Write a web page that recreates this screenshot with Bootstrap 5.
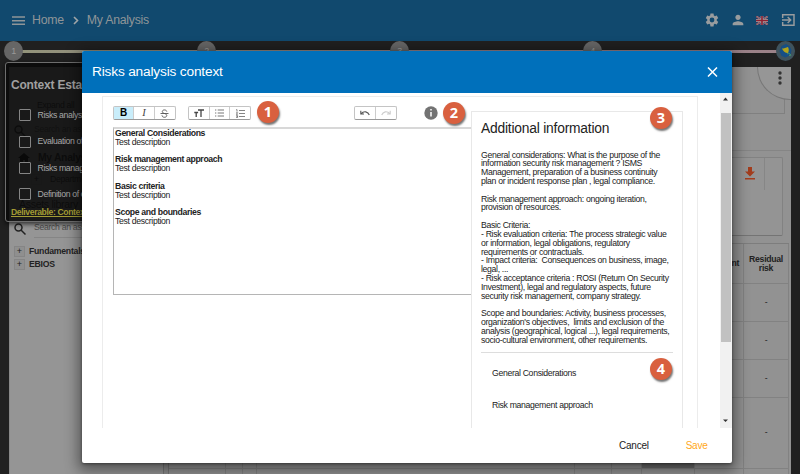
<!DOCTYPE html>
<html lang="en">
<head>
<meta charset="utf-8">
<meta name="viewport" content="width=device-width, initial-scale=1">
<title>Risks analysis context</title>
<link href="https://cdn.jsdelivr.net/npm/bootstrap@5.3.0/dist/css/bootstrap.min.css" rel="stylesheet">
<style>
html,body{height:474px;overflow:hidden}
body{background:#202020;font-family:"Liberation Sans",Arial,sans-serif;font-size:8.7px;letter-spacing:-.33px;line-height:8.83px;color:#222;position:relative}
svg{display:block;flex:none}
.topbar{height:41px;background:#11496e;color:#8f9598;font-size:12.3px;letter-spacing:-.25px;line-height:14px;padding:0 4px 1px 12px}
.crumbs{gap:7px}
.stepper{height:21px;padding:0 5px 0 4px;position:relative}
.stepper::before{content:"";position:absolute;left:14px;right:14px;top:9px;height:3px;background:linear-gradient(90deg,#92937a,#94808a 60%,#9b8288)}
.stepdot{width:19px;height:20px;border-radius:50%;background:#666;color:#999;font-size:9px;position:relative}
.stepdot.done{background:#3f535d}
.backpage{height:412px;margin:5px 9px 0;color:#222;background:#8e8e8e}
.pane-left{width:155px;height:407px;background:#959595;border-left:1px solid #888;border-right:1px solid #777;padding:34px 0 0 4px}
.expand{height:24px;padding-left:23px}
.libsearch{height:22px;gap:8px}
.libsearch span{border-bottom:1px solid #858585;width:110px;height:15px;line-height:9px;color:#4c4c4c}
.home-node{height:22px;gap:8px;padding-left:4px;font-size:10.4px}
.dept-node{height:20px;gap:8px;padding-left:17px}
.lib-title{height:34px;padding:9px 0 0 5px;font-size:10.6px;line-height:12px}
.lib-node{height:13px;gap:4px;letter-spacing:-.25px}
.plusbox{width:11px;height:11px;border:1px solid #858585;background:#8f8f8f;font-size:9px;line-height:9px;letter-spacing:0}
.pane-right{height:407px;background:#929292;border-left:1px solid #777;margin-left:4px;position:relative}
.cornerfab{position:absolute;right:0;top:0;width:34px;height:33px;border-bottom-left-radius:33px;border-left:1px solid #777;border-bottom:1px solid #777;background:#969696}
.strip1{height:47px;margin-right:6px;border:1px solid #808080;border-top:0}
.strip2{height:37px;border-bottom:1px solid #858585}
.strip3{height:79px;margin:6px 8px 7px 0;border:1px solid #828282;border-bottom-color:#747474;border-radius:2px;background:#949494}
.strip3 svg{margin:8px 8px 0 0}
.strip3 i{width:18px;height:32px;border-left:1px solid #868686}
.risks{margin-right:2px;display:grid;grid-template-columns:57px 17px 14px 318px 37px 30px 53px 49px 1fr;grid-template-rows:40px 38px 37.5px 38px 71px 20px;border-top:1px solid #7d7d7d}
.risks>div{border-right:1px solid #828282;border-bottom:1px solid #828282;display:flex;align-items:center;justify-content:center;text-align:center}
.risks .hd{font-weight:bold;line-height:9px;font-size:8.7px;letter-spacing:-.3px}
.risks .shade{background:#6c6c6c}
.ctx{position:absolute;left:5px;top:62px;width:150px;height:160px;border:1px solid #6e6e6e;border-radius:3px;background:rgba(10,10,10,.89);box-shadow:0 2px 5px rgba(0,0,0,.7);padding:15px 5px 0}
.ctx h2{font-size:12px;letter-spacing:-.2px;line-height:14px;font-weight:bold;color:#a0a0a0;margin:0 0 10px}
.ctx-row{height:26.4px;gap:7px;padding-left:7.5px;color:#a8a8a8;letter-spacing:-.36px}
.tick{width:12px;height:12px;border:1.5px solid #858585;border-radius:1px;flex:none}
.ctx a{color:#a29c34;font-weight:bold;font-size:8.6px;letter-spacing:-.36px;display:block;line-height:9px}
.dlg{position:absolute;left:82px;top:51px;width:649.5px;height:412px;background:#fff;border-radius:2px;box-shadow:0 4px 14px 4px rgba(0,0,0,.42),0 1px 3px rgba(0,0,0,.4);overflow:hidden}
.dlg-head{height:42px;background:#0070bb;color:#fff;font-size:13.7px;letter-spacing:-.18px;line-height:16px;padding:0 13.5px 1px 10px}
.dlg-main{height:335px;overflow:hidden}
.sheet{margin:3px 21.5px 0 20px;width:596px;height:350px;border:1px solid #ececec;padding:9px 15px 0 10px}
.edit{width:358px;flex:none}
.tools{height:15px}
.tgroup{height:14px;border:1px solid #c4c4c4;border-bottom-color:#999;border-radius:2px;background:#fff;letter-spacing:0}
.tgroup span{width:20.4px;border-right:1px solid #ccc}
.tgroup span:last-child{border-right:0}
.tgroup .on{background:#c9edfa}
.area{height:168px;margin-top:6px;border:1px solid #b5b5b5;border-top:2px solid #d8d8d8;border-right:0;padding:0 0 0 1px}
.area b{letter-spacing:-.36px}
.info-card{margin-top:5px;width:212px;height:340px;border:1px solid #e8e8e8;background:#fff;padding:9px 9px}
.info-card h3{font-size:13.8px;letter-spacing:-.2px;line-height:16px;font-weight:normal;margin:0 0 13.5px}
.info-card p{margin:0 0 8.83px;white-space:pre}
.info-card .rule{border-top:1px solid #ddd;margin:-1.5px 0 5px}
.info-card .opt{height:31.5px;padding-left:11px}
.scroller{width:11.5px;background:#f1f1f1;height:335px}
.scroller b{width:10px;height:229px;background:#c1c1c1}
.dlg-foot{height:35px;font-size:10px;letter-spacing:-.25px;gap:37px;padding-right:24px;line-height:11px}
.callout{position:absolute;width:22px;height:22px;border-radius:50%;background:#d9603f;color:#fff;font:bold 14.5px/21px "Open Sans","Liberation Sans",sans-serif;letter-spacing:0;text-align:center;box-shadow:1px 2px 2px rgba(0,0,0,.55)}
.c1{left:257px;top:101px}.c2{left:443px;top:102px}.c3{left:650px;top:107px}.c4{left:650px;top:358px}
</style>
<script src="https://cdn.jsdelivr.net/npm/bootstrap@5.3.0/dist/js/bootstrap.bundle.min.js"></script>
</head>
<body>
<header class="topbar d-flex align-items-center justify-content-between">
  <div class="crumbs d-flex align-items-center">
    <svg width="13" height="9" viewBox="0 0 13 9" stroke="#8f9598" stroke-width="1.4"><path d="M0 1h13M0 4.700h13M0 8.300h13"/></svg>
    <span>Home</span>
    <svg width="9" height="9" viewBox="0 0 9 9" fill="none" stroke="#a0a5a8" stroke-width="1.6"><path d="M3 1l3.500 3.500L3 8"/></svg>
    <span>My Analysis</span>
  </div>
  <div class="d-flex align-items-center">
    <svg width="16" height="16" viewBox="0 0 24 24" fill="#999c9e"><path d="M19.14 12.94c.04-.3.06-.61.06-.94 0-.32-.02-.64-.07-.94l2.03-1.58c.18-.14.23-.41.12-.61l-1.92-3.32c-.12-.22-.37-.29-.59-.22l-2.39.96c-.5-.38-1.03-.7-1.62-.94l-.36-2.54c-.04-.24-.24-.41-.48-.41h-3.84c-.24 0-.43.17-.47.41l-.36 2.54c-.59.24-1.13.57-1.62.94l-2.39-.96c-.22-.08-.47 0-.59.22L2.74 8.87c-.12.21-.08.47.12.61l2.03 1.58c-.05.3-.09.63-.09.94s.02.64.07.94l-2.03 1.58c-.18.14-.23.41-.12.61l1.92 3.32c.12.22.37.29.59.22l2.39-.96c.5.38 1.03.7 1.62.94l.36 2.54c.05.24.24.41.48.41h3.84c.24 0 .44-.17.47-.41l.36-2.54c.59-.24 1.13-.56 1.62-.94l2.39.96c.22.08.47 0 .59-.22l1.92-3.32c.12-.22.07-.47-.12-.61l-2.01-1.58zM12 15.6A3.6 3.6 0 1 1 12 8.400a3.6 3.6 0 0 1 0 7.200z"/></svg>
    <svg style="margin:0 10px" width="16" height="16" viewBox="0 0 24 24" fill="#999c9e"><path d="M12 12c2.210 0 4-1.790 4-4s-1.790-4-4-4-4 1.790-4 4 1.790 4 4 4zm0 2c-2.670 0-8 1.340-8 4v2h16v-2c0-2.660-5.330-4-8-4z"/></svg>
    <svg width="12" height="9" viewBox="0 0 12 9"><path fill="#2a3560" d="M0 0h12v9H0z"/><path d="M0 0l12 9M12 0L0 9" stroke="#9c9c9c" stroke-width="1.800"/><path d="M0 0l12 9M12 0L0 9" stroke="#8a1f30" stroke-width=".7"/><path d="M6 0v9M0 4.500h12" stroke="#a5a5a5" stroke-width="2.800"/><path d="M6 0v9M0 4.500h12" stroke="#8f1f30" stroke-width="1.600"/></svg>
    <svg style="margin-left:12px" width="16" height="16" viewBox="0 0 24 24" fill="none" stroke="#999c9e" stroke-width="2.200"><path d="M4 9V4h17v16H4v-5M3 12h13M11.500 7.500l4.500 4.500-4.500 4.500"/></svg>
  </div>
</header>
<div class="stepper d-flex justify-content-between">
  <div class="stepdot d-flex align-items-center justify-content-center">1</div>
  <div class="stepdot d-flex align-items-center justify-content-center">2</div>
  <div class="stepdot d-flex align-items-center justify-content-center">3</div>
  <div class="stepdot d-flex align-items-center justify-content-center">4</div>
  <div class="stepdot done d-flex align-items-center justify-content-center">
    <svg width="14" height="14" viewBox="0 0 14 14"><path fill="#164f85" d="M7 0l3.500 2 2 4-1 5-5 2.500-4-1.500-2-5 2-5z"/><path fill="#b2a41c" d="M3 4.500c2 0 4-.6 6-1.500 1 2 1 4 0 6C6 9 4 7 3 4.500z"/><path d="M8 10l2-1 2 3M10 12l2-2" fill="none" stroke="#3f8a72"/></svg>
  </div>
</div>
<main class="backpage d-flex">
  <aside class="pane-left text-nowrap overflow-hidden">
    <div class="expand">Expand all</div>
    <div class="libsearch d-flex">
      <svg width="12" height="12" viewBox="0 0 12 12" fill="none" stroke="#222" stroke-width="1.500"><circle cx="4.500" cy="4.500" r="3.500"/><path d="M7 7l4.500 4.500"/></svg><span>Search an asset</span>
    </div>
    <div class="home-node d-flex align-items-center fw-bold"><svg width="12" height="10" viewBox="0 0 12 10"><path d="M6 0L0 5h2v5h3V7h2v3h3V5h2z"/></svg>My Analysis</div>
    <div class="dept-node d-flex align-items-center"><span class="plusbox text-center">+</span>Department</div>
    <div class="lib-title">Assets library</div>
    <div class="libsearch d-flex align-items-start">
      <svg width="12" height="12" viewBox="0 0 12 12" fill="none" stroke="#222" stroke-width="1.500"><circle cx="4.500" cy="4.500" r="3.500"/><path d="M7 7l4.500 4.500"/></svg><span>Search an asset</span>
    </div>
    <div class="lib-node d-flex align-items-center fw-bold"><span class="plusbox fw-normal text-center">+</span>Fundamentals</div>
    <div class="lib-node d-flex align-items-center fw-bold"><span class="plusbox fw-normal text-center">+</span>EBIOS</div>
  </aside>
  <section class="pane-right flex-grow-1">
    <div class="strip1"></div>
    <div class="strip2"></div>
    <div class="strip3 d-flex justify-content-end">
      <svg width="12" height="15" viewBox="0 0 12 15" fill="#a33d1d"><path d="M4 1h4v4.500h3L6 10.500 1 5.500h3zM1 12h10v1.500H1z"/></svg><i></i>
    </div>
    <div class="risks">
      <div></div><div></div><div></div><div></div><div></div><div></div><div></div><div class="hd justify-content-end pe-1">Treatment</div><div class="hd">Residual<br>risk</div>
      <div></div><div></div><div></div><div></div><div></div><div></div><div></div><div></div><div>-</div>
      <div></div><div></div><div></div><div></div><div></div><div></div><div></div><div></div><div>-</div>
      <div></div><div></div><div></div><div></div><div></div><div></div><div></div><div></div><div>-</div>
      <div></div><div></div><div></div><div></div><div></div><div></div><div class="shade"></div><div></div><div>-</div>
      <div></div><div></div><div></div><div></div><div></div><div></div><div></div><div></div><div></div>
    </div>
    <div class="cornerfab d-flex justify-content-center ps-2 pt-1"><svg style="margin-left:2px" width="4" height="14" viewBox="0 0 4 14" fill="#333"><circle cx="2" cy="2" r="1.700"/><circle cx="2" cy="7" r="1.700"/><circle cx="2" cy="12" r="1.700"/></svg></div>
  </section>
</main>
<section class="ctx text-nowrap overflow-hidden">
  <h2>Context Establishment</h2>
  <div class="ctx-row d-flex align-items-center"><span class="tick"></span>Risks analysis context</div>
  <div class="ctx-row d-flex align-items-center"><span class="tick"></span>Evaluation of trends</div>
  <div class="ctx-row d-flex align-items-center"><span class="tick"></span>Risks management</div>
  <div class="ctx-row d-flex align-items-center"><span class="tick"></span>Definition of criteria</div>
  <a href="#">Deliverable: Context validation</a>
</section>

<section class="dlg d-flex flex-column" role="dialog">
  <div class="dlg-head d-flex align-items-center justify-content-between">
    <span>Risks analysis context</span>
    <svg width="11" height="10" viewBox="0 0 11 10" stroke="#fff" stroke-width="1.500"><path d="M1 .5l9 9M10 .5l-9 9"/></svg>
  </div>
  <div class="dlg-main d-flex justify-content-between">
    <div class="sheet d-flex">
      <div class="edit">
        <div class="tools d-flex align-items-start">
          <div class="tgroup d-flex">
            <span class="on d-flex align-items-center justify-content-center fw-bold text-black" style="font-size:10px">B</span>
            <span class="d-flex align-items-center justify-content-center fst-italic" style="font-family:'Liberation Serif',serif;font-size:10.500px;color:#444">I</span>
            <span class="d-flex align-items-center justify-content-center"><svg width="9" height="9" viewBox="0 0 9 9" fill="none" stroke="#555" stroke-width=".9"><path d="M.5 4.500h8M6.800 2.500C6.500.5 2.300.3 2.300 2.600c0 1 .9 1.500 2.200 1.900M4.500 4.500C8 5.500 7 8.300 4.500 8.300 3 8.300 2 7.500 2 6.300"/></svg></span>
          </div>
          <div class="tgroup d-flex" style="margin-left:12px">
            <span class="d-flex align-items-center justify-content-center"><svg width="10" height="8" viewBox="0 0 10 8" fill="none" stroke="#444" stroke-width="1.300"><path d="M4 1h6M7 1v7M.3 3.500h3.800M2.200 3.500V8"/></svg></span>
            <span class="d-flex align-items-center justify-content-center"><svg width="9" height="8" viewBox="0 0 9 8" stroke="#666" stroke-width=".9"><path d="M0 1h1.300M0 4h1.300M0 7h1.300M2.700 1H9M2.700 4H9M2.700 7H9"/></svg></span>
            <span class="d-flex align-items-center justify-content-center"><svg width="9" height="9" viewBox="0 0 9 9" fill="none" stroke="#666" stroke-width=".8"><path d="M3 1.500h6M3 4.500h6M3 7.500h6M.3.6H1v2M.2 3.700h1.400L.3 5.400h1.400M.2 6.600h1.400v1.900H.2M.5 7.500h1"/></svg></span>
          </div>
          <div class="tgroup d-flex" style="margin-left:103px">
            <span class="d-flex align-items-center justify-content-center"><svg width="10" height="7" viewBox="0 0 10 7" fill="none" stroke="#555" stroke-width="1.100"><path d="M.8.800v3.200H4M1 3.800C4 .5 8 1.500 9.300 5"/></svg></span>
            <span class="d-flex align-items-center justify-content-center"><svg width="10" height="7" viewBox="0 0 10 7" fill="none" stroke="#ccc" stroke-width="1.100"><path d="M9.200.800v3.200H6M9 3.800C6 .5 2 1.500.7 5"/></svg></span>
          </div>
          <svg style="margin-left:27px" width="14" height="14" viewBox="0 0 14 14"><circle cx="7" cy="7" r="6.700" fill="#737373"/><path d="M7 3v1.600M7 6v4.500" stroke="#fff" stroke-width="1.500"/></svg>
        </div>
        <div class="area"><b>General Considerations</b><br>Test description<br><br><b>Risk management approach</b><br>Test description<br><br><b>Basic criteria</b><br>Test description<br><br><b>Scope and boundaries</b><br>Test description</div>
      </div>
      <div class="info-card flex-shrink-0">
        <h3>Additional information</h3>
<p>General considerations: What is the purpose of the
information security risk management ? ISMS
Management, preparation of a business continuity
plan or incident response plan , legal compliance.</p>
<p>Risk management approach: ongoing iteration,
provision of resources.</p>
<p>Basic Criteria:
- Risk evaluation criteria: The process strategic value
or information, legal obligations, regulatory
requirements or contractuals.
- Impact criteria:  Consequences on business, image,
legal, ...
- Risk acceptance criteria : ROSI (Return On Security
Investment), legal and regulatory aspects, future
security risk management, company strategy.</p>
<p>Scope and boundaries: Activity, business processes,
organization's objectives,  limits and exclusion of the
analysis (geographical, logical ...), legal requirements,
socio-cultural environment, other requirements.</p>
        <div class="rule"></div>
        <div class="opt d-flex align-items-center">General Considerations</div>
        <div class="opt d-flex align-items-center">Risk management approach</div>
      </div>
    </div>
    <div class="scroller d-flex flex-column justify-content-between align-items-center flex-shrink-0">
      <svg width="11" height="20" viewBox="0 0 11 20" fill="#333"><path d="M5.500 4.500L8 7.500H3z"/></svg>
      <b></b>
      <svg width="11" height="86" viewBox="0 0 11 86" fill="#333"><path d="M5.500 80L8 77.500H3z"/></svg>
    </div>
  </div>
  <div class="dlg-foot d-flex align-items-center justify-content-end"><span>Cancel</span><span style="color:#ffa71a">Save</span></div>
</section>
<div class="callout c1">1</div>
<div class="callout c2">2</div>
<div class="callout c3">3</div>
<div class="callout c4">4</div>
</body>
</html>
